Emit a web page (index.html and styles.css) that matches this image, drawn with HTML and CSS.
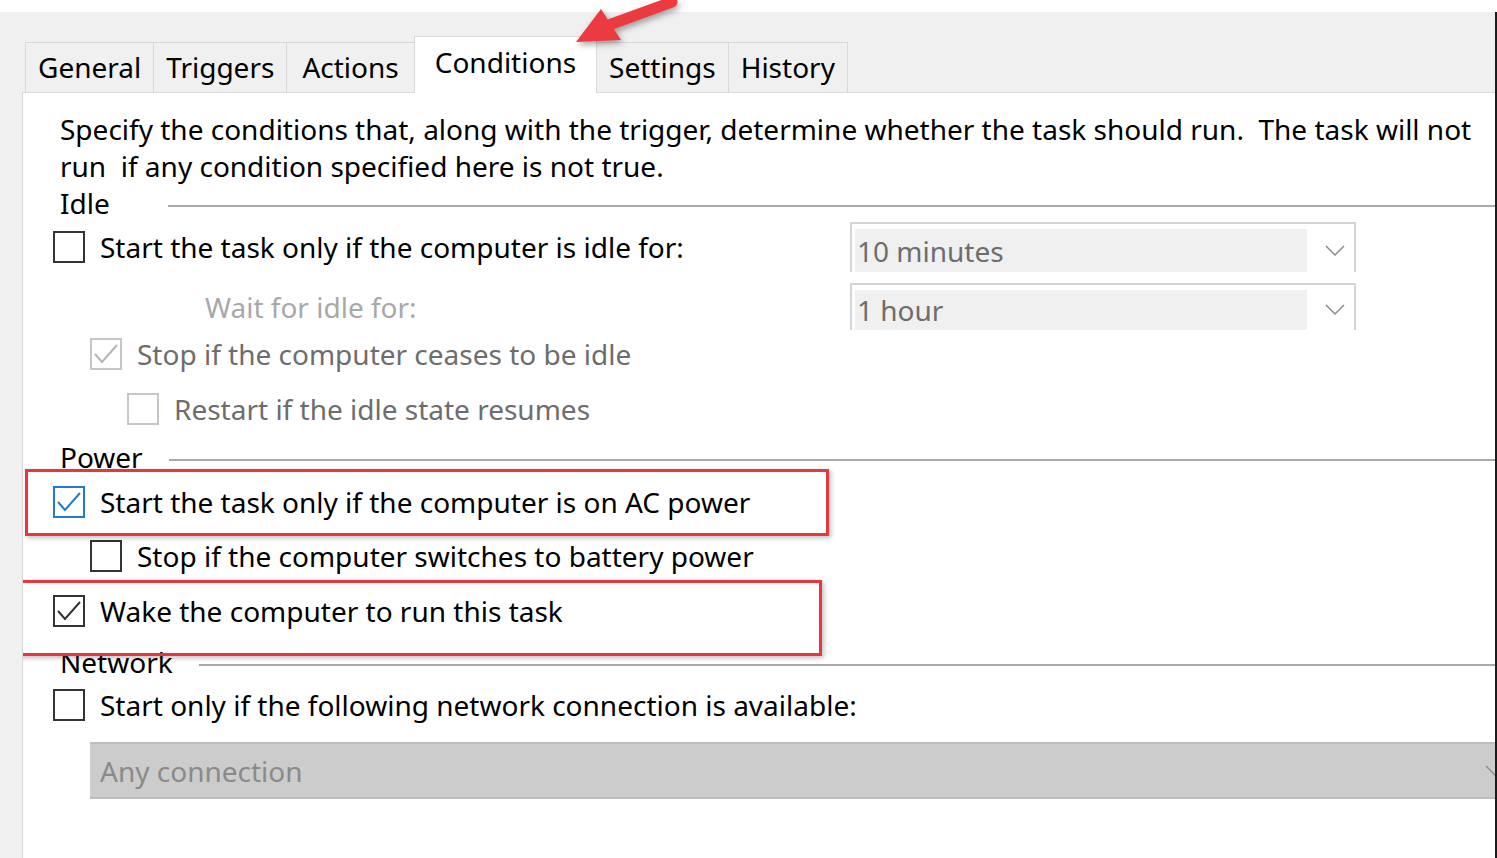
FILE: index.html
```html
<!DOCTYPE html>
<html lang="en">
<head>
<meta charset="utf-8">
<title>Task Properties - Conditions</title>
<link rel="stylesheet" href="styles.css">
</head>
<body>
<div class="dialog">
	<!-- annotation arrow -->
	<svg class="arrow" width="130" height="62" viewBox="0 0 130 62">
		<line x1="46" y1="26" x2="112" y2="2" stroke="#ec3b40" stroke-width="11" stroke-linecap="round"/>
		<polygon points="16,42 41,9 61,40" fill="#ec3b40"/>
	</svg>

	<ul class="tabs">
		<li>General</li>
		<li>Triggers</li>
		<li class="wide_tab">Actions</li>
		<li class="on">Conditions</li>
		<li>Settings</li>
		<li>History</li>
	</ul>

	<div class="panel">
		<p class="desc">Specify the conditions that, along with the trigger, determine whether the task should run.&nbsp; The task will not<br>run&nbsp; if any condition specified here is not true.</p>

		<div class="legend"><span>Idle</span></div>
		<div class="row_combo">
			<label class="check"><span class="box"></span>Start the task only if the computer is idle for:</label>
			<div class="combo">
				<span class="field">10 minutes</span>
				<span class="chev"><svg width="20" height="12" viewBox="0 0 20 12"><polyline points="1,1 10,10 19,1" fill="none" stroke="#8c8c8c" stroke-width="1.5"/></svg></span>
			</div>
		</div>
		<div class="row_combo">
			<span class="wait">Wait for idle for:</span>
			<div class="combo">
				<span class="field">1 hour</span>
				<span class="chev"><svg width="20" height="12" viewBox="0 0 20 12"><polyline points="1,1 10,10 19,1" fill="none" stroke="#8c8c8c" stroke-width="1.5"/></svg></span>
			</div>
		</div>
		<label class="check sub off stop">
			<span class="box"><svg width="26" height="22" viewBox="0 0 26 22"><polyline points="2,11 9,19 24,2" fill="none" stroke="#b4b4b4" stroke-width="2"/></svg></span>Stop if the computer ceases to be idle
		</label>
		<label class="check sub2 off">
			<span class="box"></span>Restart if the idle state resumes
		</label>

		<div class="legend power"><span>Power</span></div>
		<div class="mark mark_ac">
			<label class="check blue">
				<span class="box"><svg width="26" height="22" viewBox="0 0 26 22"><polyline points="2,11 9,19 24,2" fill="none" stroke="#1f7ad8" stroke-width="2"/></svg></span>Start the task only if the computer is on AC power
			</label>
		</div>
		<label class="check sub battery">
			<span class="box"></span>Stop if the computer switches to battery power
		</label>
		<div class="mark mark_wake">
			<label class="check">
				<span class="box"><svg width="26" height="22" viewBox="0 0 26 22"><polyline points="2,11 9,19 24,2" fill="none" stroke="#333" stroke-width="2"/></svg></span>Wake the computer to run this task
			</label>
		</div>

		<div class="legend network"><span>Network</span></div>
		<label class="check net">
			<span class="box"></span>Start only if the following network connection is available:
		</label>
		<div class="combo wide">
			<span>Any connection</span>
			<span class="chev"><svg width="20" height="12" viewBox="0 0 20 12"><polyline points="1,1 10,10 19,1" fill="none" stroke="#8c8c8c" stroke-width="1.5"/></svg></span>
		</div>
	</div>
</div>
</body>
</html>
```

FILE: styles.css
```css
* {margin:0; padding:0; box-sizing:border-box}
li {list-style:none}
body {
	font-family: "Noto Sans", "Open Sans", sans-serif;
	font-size: 28px;
	color: #000;
	background: #fff;
	overflow: hidden;
}

.dialog {
	position: relative;
	margin-top: 12px;
	height: 846px;
	background: #f0f0f0;
	border-right: 2px solid #1b1b1b;
	padding: 24px 0 0 22px;
	display: flex;
	flex-direction: column;
}
.arrow {
	position: absolute;
	left: 560px;
	top: -12px;
	filter: drop-shadow(2px 3px 3px rgba(0,0,0,.35));
	z-index: 3;
}

/* tabs */
.tabs {
	display: flex;
	align-items: flex-end;
	height: 56px;
	margin-left: 4px;
}
.tabs > li {
	height: 50px;
	line-height: 48px;
	padding: 0 12px;
	border: 1px solid #d9d9d9;
	border-bottom: none;
	margin-left: -1px;
	background: #f0f0f0;
}
.tabs > li.wide_tab {padding: 0 15px}
.tabs > li.on {
	position: relative;
	z-index: 1;
	height: 57px;
	line-height: 50px;
	margin-bottom: -1px;
	padding: 0 20px;
	background: #fff;
}

/* panel */
.panel {
	flex: 1;
	background: #fff;
	border-top: 1px solid #d9d9d9;
	border-left: 1px solid #d9d9d9;
	padding: 18px 0 0 30px;
	overflow: hidden;
	display: flex;
	flex-direction: column;
}
.desc {
	margin-left: 7px;
	line-height: 37px;
	white-space: nowrap;
}
.legend {
	display: flex;
	align-items: center;
	line-height: 37px;
	margin-left: 7px;
}
.legend > span {
	min-width: 108px;
	padding-right: 26px;
}
.legend::after {
	content: "";
	flex: 1;
	border-top: 2px solid #a9a9a9;
	margin-top: 4px;
}
.legend.power {margin-top: 3px}
.legend.network {margin-top: -12px}

/* checkbox rows */
.check {
	display: flex;
	align-items: center;
	height: 55px;
	white-space: nowrap;
}
.box {
	flex: none;
	width: 32px;
	height: 32px;
	margin-right: 15px;
	border: 2px solid #333;
	background: #fff;
	display: flex;
	align-items: center;
	justify-content: center;
}
.check.sub {margin-left: 37px}
.check.sub2 {margin-left: 74px}
.check.off {color: #6d6d6d}
.check.off .box {border-color: #c6c6c6}
.check.blue .box {border-color: #1f7ad8}
.check.stop {margin-top: -4px}
.check.battery {margin-top: -8px}
.check.net {height: 47px}

.row_combo {
	display: grid;
	grid-template-columns: 797px 506px;
	align-items: center;
	height: 50px;
}
.row_combo + .row_combo {
	margin-top: 11px;
	height: 47px;
}
.row_combo > .check {height: auto}
.wait {
	padding-left: 152px;
	color: #a8a8a8;
}

.combo {
	height: 100%;
	display: flex;
	border: 2px solid #d4d4d4;
	border-bottom: none;
	padding: 5px 0 0 3px;
}
.combo .field {
	width: 452px;
	display: flex;
	align-items: center;
	padding-left: 2px;
	background: #f0f0f0;
	color: #6d6d6d;
}
.chev {
	flex: 1;
	display: flex;
	align-items: center;
	justify-content: center;
	padding-left: 8px;
}
.combo.wide {
	flex: none;
	width: 1420px;
	height: 57px;
	margin: 14px 0 0 37px;
	padding: 0 5px 0 10px;
	align-items: center;
	background: #ccc;
	border: 2px solid #bdbdbd;
	border-left: none;
	border-right: none;
	color: #8a8a8a;
}
.combo.wide .chev {flex: none; margin-left: auto; padding: 0}

/* red annotation boxes */
.mark {
	position: relative;
	z-index: 2;
	width: 804px;
	border: 3px solid #e8363c;
	box-shadow: 2px 2px 5px rgba(0,0,0,.25);
}
.mark_ac {
	margin: -7px 0 0 -28px;
	padding: 2px 0 4px 25px;
}
.mark_wake {
	margin: -3px 0 0 -35px;
	padding: 0 0 15px 32px;
}
```
